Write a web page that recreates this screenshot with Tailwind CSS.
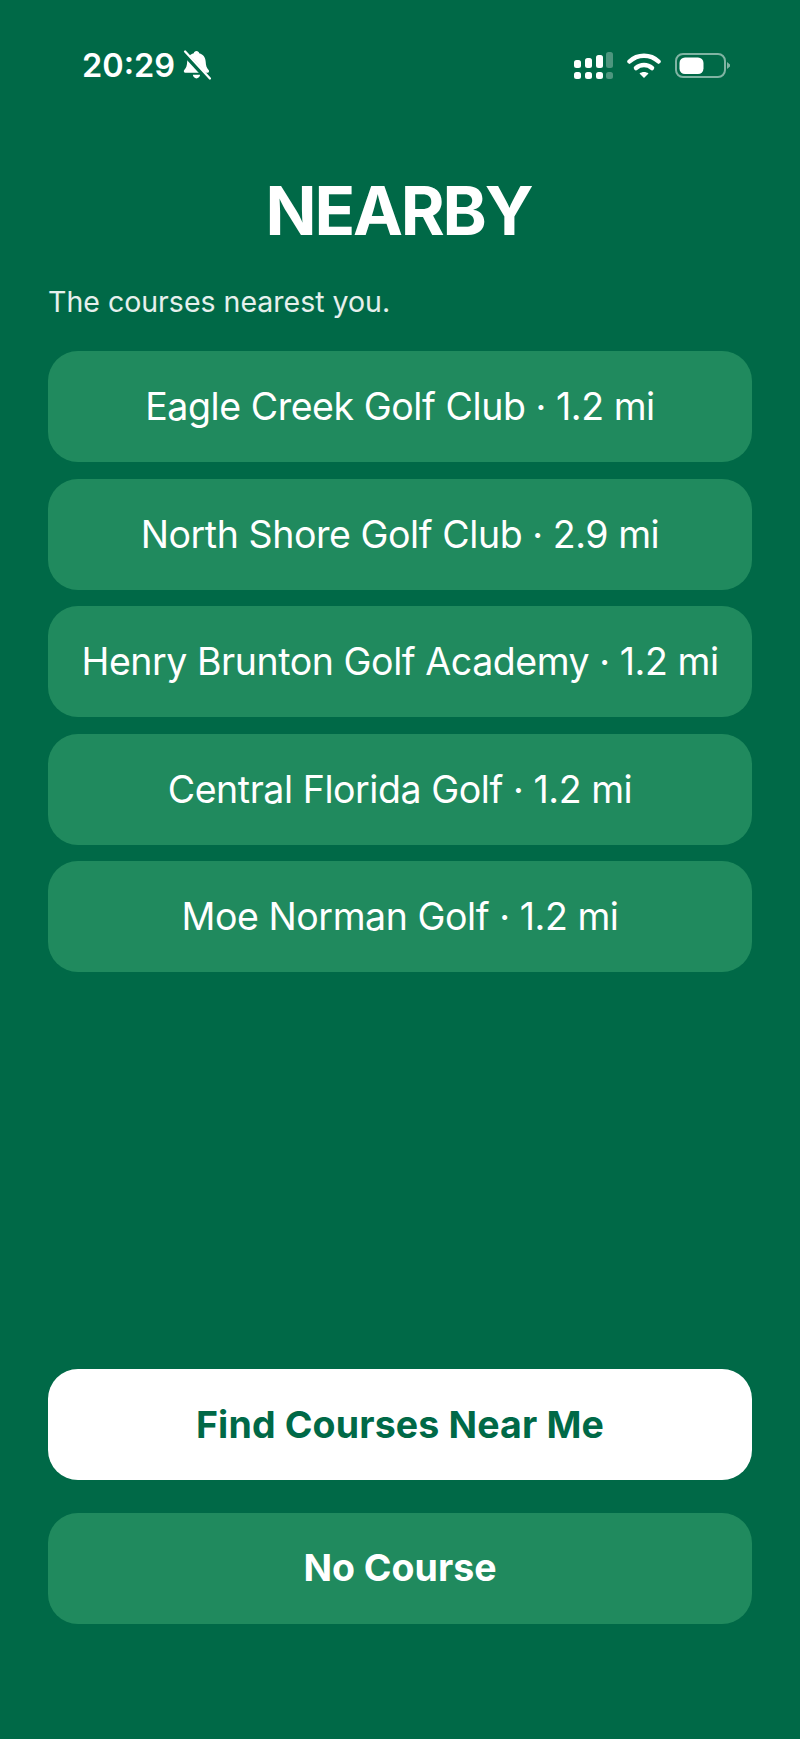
<!DOCTYPE html>
<html lang="en">
<head>
  <meta charset="UTF-8" />
  <meta name="viewport" content="width=device-width, initial-scale=1" />
  <title>Nearby</title>
  <script src="https://cdn.jsdelivr.net/npm/@tailwindcss/browser@4"></script>
</head>
<body class="bg-[#006947] font-[Inter,sans-serif] text-white">
  <div class="flex flex-col h-[1739px] px-12 overflow-hidden">
    <!-- status bar -->
    <div class="flex items-center justify-between h-[30px] mt-[50px] pl-[34px] pr-[22px]">
      <div class="flex items-center gap-[8px]">
        <span class="text-[32.500px] font-semibold leading-[30px] pt-[2px]">20:29</span>
        <svg width="28" height="30" viewBox="0 0 27 29">
          <path fill="#fff" d="M13 1c1.400 0 2.400.9 2.600 2.200 4 1 6.100 4 6.300 8.200.2 3.500.8 5.900 2.800 8 .9 1 .4 2.600-.9 2.600H2.200c-1.400 0-1.900-1.600-1-2.600 2-2.100 2.600-4.500 2.800-8 .2-4.200 2.300-7.200 6.400-8.200C10.600 1.900 11.600 1 13 1zM9.500 24h7c-.2 2-1.700 3.500-3.500 3.500S9.700 26 9.500 24z"/>
          <path d="M1 3l23 25" stroke="#006947" stroke-width="5"/>
          <path d="M2 1.500l24 26" stroke="#fff" stroke-width="2.200" stroke-linecap="round"/>
        </svg>
      </div>
      <div class="flex items-center">
        <svg width="39" height="27" viewBox="0 0 39 27" fill="#fff">
          <rect x="0" y="8" width="7" height="8" rx="2.500"/>
          <rect x="11" y="6" width="7" height="10" rx="2.500"/>
          <rect x="22" y="3" width="7" height="13" rx="2.500"/>
          <rect x="32" y="0" width="7" height="16" rx="2.500" fill-opacity=".3"/>
          <rect x="0" y="20" width="7" height="7" rx="2.500"/>
          <rect x="11" y="20" width="7" height="7" rx="2.500"/>
          <rect x="22" y="20" width="7" height="7" rx="2.500"/>
          <rect x="32" y="20" width="7" height="7" rx="2.500" fill-opacity=".3"/>
        </svg>
        <svg class="ml-[14px]" width="34" height="25" viewBox="0 0 34 25" fill="none">
          <path d="M2.500 8.500C10.500.8 23.500.8 31.500 8.500" stroke="#fff" stroke-width="4.500" stroke-linecap="round"/>
          <path d="M9 15c4.500-4 11.500-4 16 0" stroke="#fff" stroke-width="4.500" stroke-linecap="round"/>
          <path fill="#fff" d="M12.500 20.500c2.500-2 6.500-2 9 0L17 25z"/>
        </svg>
        <svg class="ml-[14px]" width="55" height="25" viewBox="0 0 55 25" fill="none">
          <rect x="1" y="1" width="49" height="23" rx="7" stroke="#fff" stroke-opacity=".5" stroke-width="2"/>
          <rect x="4.500" y="4.500" width="24" height="16.500" rx="5.500" fill="#fff"/>
          <path d="M52 9l3 2.500v2l-3 2.500z" fill="#fff" fill-opacity=".5"/>
        </svg>
      </div>
    </div>

    <h1 class="mt-[93px] pr-[3px] text-center text-[67px] font-bold leading-[76px] tracking-[-2.200px]">NEARBY</h1>
    <p class="mt-[35px] text-[28.500px] leading-[36px] text-white/90">The courses nearest you.</p>

    <div class="mt-[31px] flex flex-col gap-[16.500px]">
      <div class="flex items-center justify-center h-[111px] pt-[2px] rounded-[30px] bg-[#208a5e] text-[37.500px] tracking-[-0.440px]">Eagle Creek Golf Club · 1.2 mi</div>
      <div class="flex items-center justify-center h-[111px] pt-[2px] rounded-[30px] bg-[#208a5e] text-[37.500px] tracking-[-0.440px]">North Shore Golf Club · 2.9 mi</div>
      <div class="flex items-center justify-center h-[111px] pt-[2px] rounded-[30px] bg-[#208a5e] text-[37.500px] tracking-[-0.440px]">Henry Brunton Golf Academy · 1.2 mi</div>
      <div class="flex items-center justify-center h-[111px] pt-[2px] rounded-[30px] bg-[#208a5e] text-[37.500px] tracking-[-0.440px]">Central Florida Golf · 1.2 mi</div>
      <div class="flex items-center justify-center h-[111px] pt-[2px] rounded-[30px] bg-[#208a5e] text-[37.500px] tracking-[-0.440px]">Moe Norman Golf · 1.2 mi</div>
    </div>

    <div class="mt-auto mb-[115px] flex flex-col gap-[33px]">
      <button class="h-[111px] pt-[2px] rounded-[30px] bg-white text-[#006947] text-[37.500px] font-bold tracking-[0.150px]">Find Courses Near Me</button>
      <button class="h-[111px] rounded-[30px] bg-[#208a5e] text-white text-[37.500px] font-bold">No Course</button>
    </div>
  </div>
</body>
</html>
